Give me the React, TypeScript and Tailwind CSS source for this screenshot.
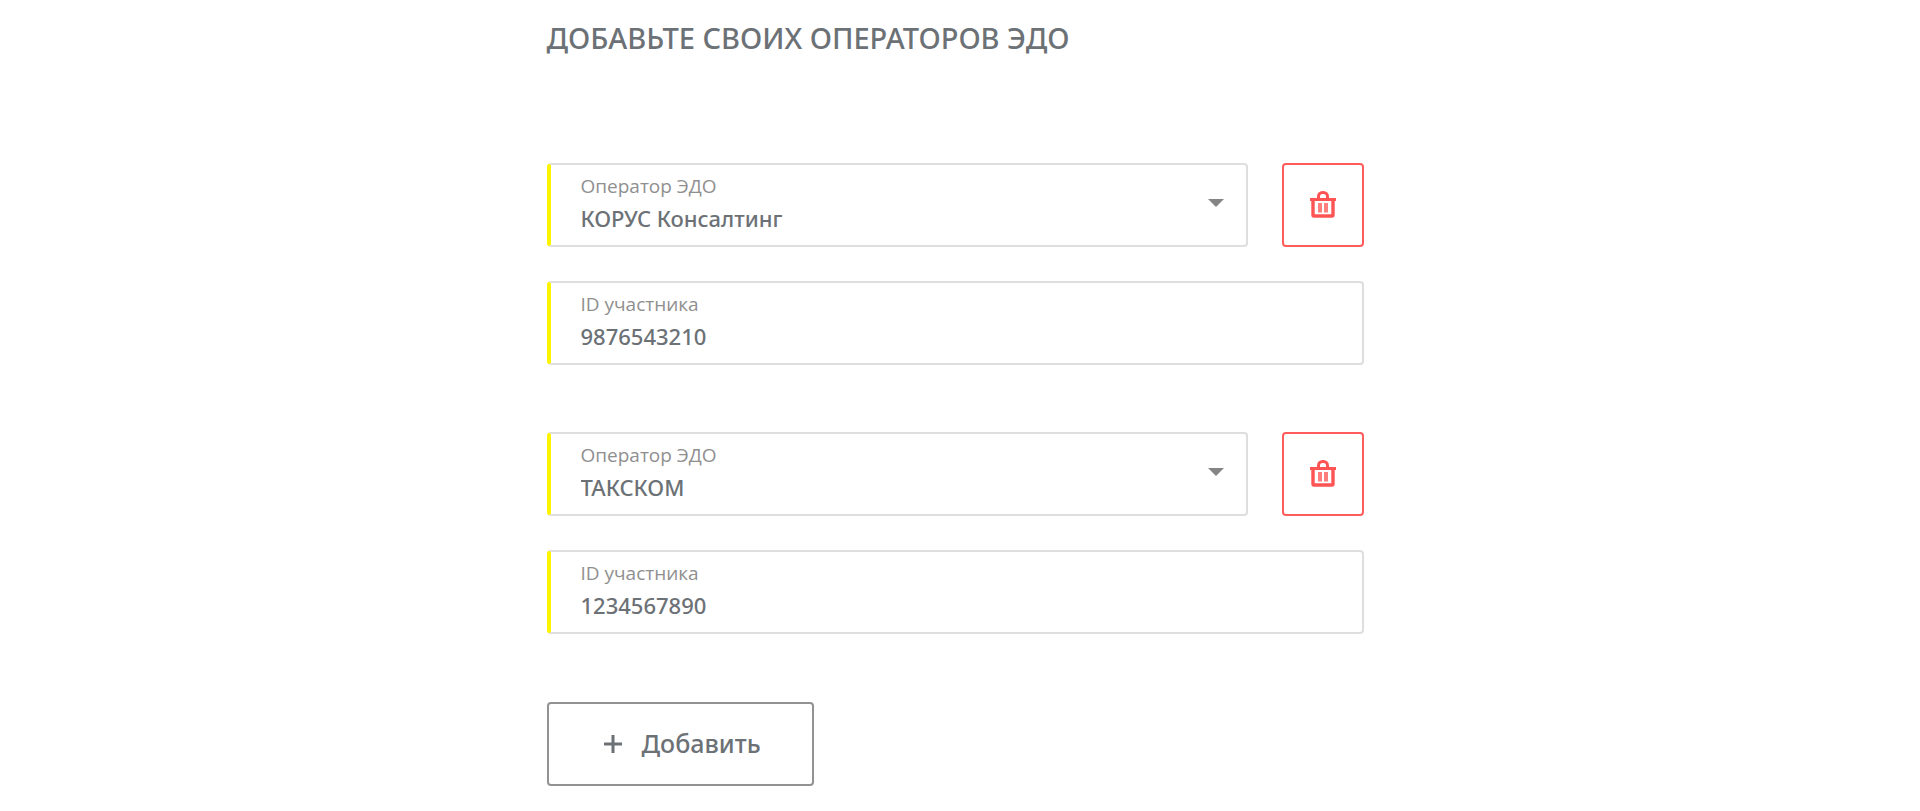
import { useId, useState } from 'react';

interface Operator {
  id: number;
  name: string;
  participantId: string;
}

const OPERATOR_NAMES = ['КОРУС Консалтинг', 'ТАКСКОМ'];

const INITIAL_OPERATORS: Operator[] = [
  { id: 1, name: 'КОРУС Консалтинг', participantId: '9876543210' },
  { id: 2, name: 'ТАКСКОМ', participantId: '1234567890' }
];

// Shared frame: grey outline with the yellow "required" edge on the left
const FIELD_CLASS =
  'relative flex h-[84px] min-w-0 grow flex-col rounded-[4px] border-2 border-l-4 border-[#dedede] border-l-[#fdf500] pt-2 pl-[30px]';
const LABEL_CLASS = "font-['Open_Sans',sans-serif] text-[19px] leading-[26px] text-[#8f8f8f]";
const VALUE_CLASS =
  'w-full appearance-none bg-transparent p-0 text-[22px] leading-[38px] font-medium text-[#6c7176] outline-none';

function TrashIcon() {
  return (
    <svg width="28" height="28" viewBox="0 0 28 28" fill="none" stroke="currentColor" aria-hidden="true">
      <path d="M1 9.5h26" strokeWidth="3" />
      <path d="M9.5 9V6.5a4 4 0 0 1 4-4h1a4 4 0 0 1 4 4V9" strokeWidth="3" />
      <path d="M4 10v15q0 1 1 1h18q1 0 1-1V10" strokeWidth="3.4" />
      <path d="M11 13v9.5M17 13v9.5" strokeWidth="4" opacity="0.75" />
    </svg>
  );
}

interface OperatorFormProps {
  operator: Operator;
  onChange: (operator: Operator) => void;
  onRemove: () => void;
}

function OperatorForm({ operator, onChange, onRemove }: OperatorFormProps) {
  const selectId = useId();
  const inputId = useId();

  return (
    <div className="flex flex-col gap-[34px]">
      <div className="flex gap-[34px]">
        <div className={FIELD_CLASS}>
          <label htmlFor={selectId} className={LABEL_CLASS}>
            Оператор ЭДО
          </label>
          <select
            id={selectId}
            value={operator.name}
            onChange={event => onChange({ ...operator, name: event.target.value })}
            className={VALUE_CLASS}
          >
            {OPERATOR_NAMES.map(name => (
              <option key={name}>{name}</option>
            ))}
          </select>
          <svg
            width="16"
            height="8"
            viewBox="0 0 16 8"
            className="pointer-events-none absolute top-[34px] right-[22px] text-[#858585]"
            aria-hidden="true"
          >
            <path d="M0 0h16L8 8z" fill="currentColor" />
          </svg>
        </div>
        <button
          type="button"
          aria-label="Удалить"
          onClick={onRemove}
          className="flex h-[84px] w-[82px] shrink-0 items-center justify-center rounded-[4px] border-2 border-[#ff5c5c] pb-0.5 text-[#ff5454]"
        >
          <TrashIcon />
        </button>
      </div>
      <div className={FIELD_CLASS}>
        <label htmlFor={inputId} className={LABEL_CLASS}>
          ID участника
        </label>
        <input
          id={inputId}
          type="text"
          value={operator.participantId}
          onChange={event => onChange({ ...operator, participantId: event.target.value })}
          className={VALUE_CLASS}
        />
      </div>
    </div>
  );
}

export default function App() {
  const [operators, setOperators] = useState(INITIAL_OPERATORS);

  const handleAdd = () => {
    setOperators(prev => [...prev, { id: Date.now(), name: OPERATOR_NAMES[0], participantId: '' }]);
  };

  return (
    <main className="min-h-screen bg-white pt-4 pr-[26px] pb-6 pl-4 font-['Noto_Sans',sans-serif] text-[#6c7176]">
      <div className="mx-auto max-w-[817px]">
        <h1 className="text-[29px] leading-[44px] font-medium">ДОБАВЬТЕ СВОИХ ОПЕРАТОРОВ ЭДО</h1>

        <div className="mt-[103px] flex flex-col gap-[67px]">
          {operators.map(operator => (
            <OperatorForm
              key={operator.id}
              operator={operator}
              onChange={next => setOperators(prev => prev.map(o => (o.id === next.id ? next : o)))}
              onRemove={() => setOperators(prev => prev.filter(o => o.id !== operator.id))}
            />
          ))}
        </div>

        <button
          type="button"
          onClick={handleAdd}
          className="mt-[68px] flex h-[84px] w-[267px] items-center gap-5 rounded-[4px] border-2 border-[#929292] pl-[55px] text-[25px] font-medium"
        >
          <svg width="18" height="18" viewBox="0 0 18 18" stroke="currentColor" strokeWidth="3" aria-hidden="true">
            <path d="M9 0v18M0 9h18" />
          </svg>
          Добавить
        </button>
      </div>
    </main>
  );
}
